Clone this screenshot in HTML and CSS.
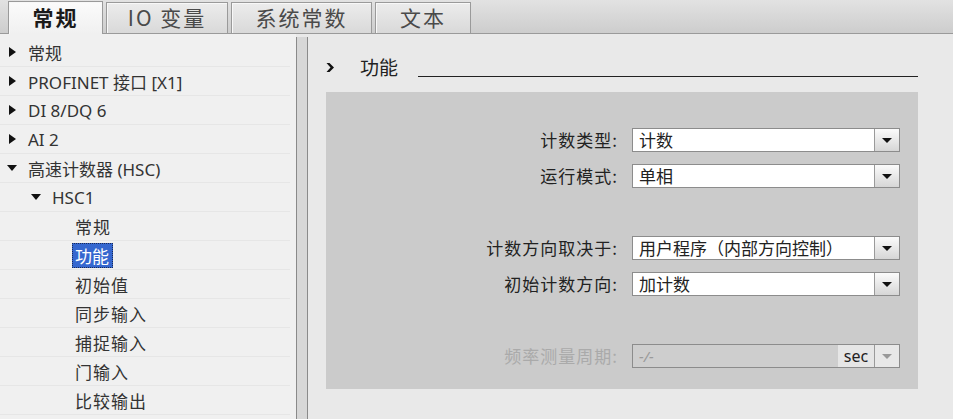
FILE: index.html
```html
<!DOCTYPE html>
<html lang="zh-CN">
<head>
    <meta charset="UTF-8">
    <title>HSC1 - 功能</title>
    <link rel="stylesheet" href="styles.css">
</head>
<body>

    <div class="tabs">
        <div class="tab active">常规</div>
        <div class="tab">IO 变量</div>
        <div class="tab">系统常数</div>
        <div class="tab">文本</div>
    </div>

    <div class="main">
        <ul class="tree">
            <li class="row"><span class="caret closed"></span>常规</li>
            <li class="row"><span class="caret closed"></span>PROFINET 接口 [X1]</li>
            <li class="row"><span class="caret closed"></span>DI 8/DQ 6</li>
            <li class="row"><span class="caret closed"></span>AI 2</li>
            <li class="row"><span class="caret open"></span>高速计数器 (HSC)</li>
            <li class="row level-2"><span class="caret open"></span>HSC1</li>
            <li class="row leaf"><span class="label">常规</span></li>
            <li class="row leaf"><span class="label selected">功能</span></li>
            <li class="row leaf"><span class="label">初始值</span></li>
            <li class="row leaf"><span class="label">同步输入</span></li>
            <li class="row leaf"><span class="label">捕捉输入</span></li>
            <li class="row leaf"><span class="label">门输入</span></li>
            <li class="row leaf"><span class="label">比较输出</span></li>
        </ul>

        <div class="splitter"></div>

        <div class="content">
            <div class="section-head">
                <svg class="chev" width="9" height="11" viewBox="0 0 9 11">
                    <path d="M0.5 1 L3.5 1 L8 5.5 L3.5 10 L0.5 10 L4.5 5.5 Z" fill="#111"/>
                </svg>
                <span class="title">功能</span>
                <span class="rule"></span>
            </div>

            <div class="panel">
                <div class="field">
                    <label>计数类型:</label>
                    <div class="select"><span class="value">计数</span><span class="btn"></span></div>
                </div>
                <div class="field">
                    <label>运行模式:</label>
                    <div class="select"><span class="value">单相</span><span class="btn"></span></div>
                </div>

                <div class="field group">
                    <label>计数方向取决于:</label>
                    <div class="select"><span class="value">用户程序（内部方向控制）</span><span class="btn"></span></div>
                </div>
                <div class="field">
                    <label>初始计数方向:</label>
                    <div class="select"><span class="value">加计数</span><span class="btn"></span></div>
                </div>

                <div class="field group disabled">
                    <label>频率测量周期:</label>
                    <div class="select"><span class="value">-/-</span><span class="unit">sec</span><span class="btn"></span></div>
                </div>
            </div>
        </div>
    </div>

</body>
</html>
```

FILE: styles.css
```css
body {
    margin: 0;
    width: 953px;
    height: 419px;
    overflow: hidden;
    font-family: "Noto Sans", "Noto Sans CJK SC", sans-serif;
    color: #222;
    background: #e9e9e9;
}

/* tab strip */
.tabs {
    height: 34px;
    box-sizing: border-box;
    display: flex;
    align-items: flex-end;
    gap: 3px;
    padding-left: 8px;
    background: linear-gradient(#e2e2e2, #cdcdcd);
    border-bottom: 1px solid #9a9a9a;
}

.tab {
    height: 31px;
    box-sizing: border-box;
    border: 1px solid #9a9a9a;
    border-bottom: none;
    box-shadow: inset 1px 1px 0 #f8f8f8;
    background: linear-gradient(#ececec, #d9d9d9);
    font-family: "Noto Sans CJK SC", sans-serif;
    font-size: 21px;
    line-height: 28px;
    letter-spacing: 2px;
    color: #4a4a4a;
    text-align: center;
}

.tab:nth-child(1) { width: 95px; }
.tab:nth-child(2) { width: 122px; }
.tab:nth-child(3) { width: 141px; }
.tab:nth-child(4) { width: 96px; }

.tab.active {
    height: 33px;
    margin-bottom: -1px;
    background: linear-gradient(#fbfbfb, #f0f0f0);
    font-weight: bold;
    color: #1a1a1a;
    line-height: 30px;
}

/* body */
.main {
    display: flex;
    height: 385px;
}

.tree {
    width: 296px;
    margin: 0;
    padding: 4px 0 0 0;
    list-style: none;
    background: #f0f0f0;
    font-size: 17px;
    color: #333;
}

.row {
    height: 29px;
    box-sizing: border-box;
    margin-right: 6px;
    padding-left: 8px;
    display: flex;
    align-items: center;
    border-bottom: 1px solid #e6e6e6;
    white-space: nowrap;
}

.row.level-2 {
    padding-left: 32px;
}

.row.leaf {
    padding-left: 72px;
}

.caret {
    width: 20px;
    height: 12px;
    position: relative;
    flex: none;
}

.caret.closed::before {
    content: "";
    position: absolute;
    left: 1px;
    top: 1px;
    border-left: 7px solid #111;
    border-top: 5px solid transparent;
    border-bottom: 5px solid transparent;
}

.caret.open::before {
    content: "";
    position: absolute;
    left: -1px;
    top: 3px;
    border-top: 6px solid #111;
    border-left: 5px solid transparent;
    border-right: 5px solid transparent;
}

.label {
    padding: 1px 3px;
    font-size: 17px;
    letter-spacing: 1px;
    font-family: "Noto Sans CJK SC", sans-serif;
    line-height: 23px;
}

.label.selected {
    background: #3567cf;
    color: #fff;
    letter-spacing: 0;
    padding-right: 4px;
    outline: 1px dotted #1a2a55;
    outline-offset: -1px;
}

.splitter {
    width: 10px;
    margin-top: 3px;
    border-left: 1px solid #8a8a8a;
    border-right: 1px solid #8a8a8a;
    background: #d7d7d7;
}

/* right side */
.content {
    flex: 1;
    padding: 22px 35px 0 18px;
    background: #e9e9e9;
}

.section-head {
    height: 22px;
    display: flex;
    align-items: flex-end;
}

.chev {
    margin: 0 25px 5px 0;
}

.title {
    font-family: "Noto Sans CJK SC", sans-serif;
    font-size: 19px;
    line-height: 22px;
    color: #222;
    margin-right: 20px;
}

.rule {
    flex: 1;
    border-bottom: 1px solid #222;
    margin-bottom: 1px;
}

.panel {
    margin-top: 14px;
    height: 297px;
    box-sizing: border-box;
    padding: 36px 18px 0 0;
    background: #cbcbcb;
    display: flex;
    flex-direction: column;
    gap: 12px;
}

.field {
    height: 24px;
    display: grid;
    grid-template-columns: 1fr 268px;
    column-gap: 14px;
    align-items: center;
}

.field.group {
    margin-top: 36px;
}

.field label {
    text-align: right;
    font-family: "Noto Sans CJK SC", sans-serif;
    font-size: 17px;
    line-height: 24px;
    letter-spacing: 1px;
    color: #222;
}

.select {
    height: 24px;
    box-sizing: border-box;
    display: flex;
    border: 1px solid #8c8c8c;
    background: #fff;
}

.value {
    flex: 1;
    padding-left: 6px;
    font-family: "Noto Sans CJK SC", sans-serif;
    font-size: 17px;
    line-height: 22px;
    color: #222;
    white-space: nowrap;
}

.btn {
    width: 24px;
    flex: none;
    border-left: 1px solid #9a9a9a;
    background: linear-gradient(#fbfbfb, #d6d6d6);
    position: relative;
}

.btn::after {
    content: "";
    position: absolute;
    left: 7px;
    top: 9px;
    border-top: 5px solid #111;
    border-left: 5px solid transparent;
    border-right: 5px solid transparent;
}

.field.disabled label {
    color: #aaaaaa;
}

.field.disabled .select {
    background: #cecece;
}

.field.disabled .value {
    color: #9a9a9a;
    font-family: "Noto Sans", sans-serif;
    font-style: italic;
    font-size: 15px;
}

.unit {
    width: 36px;
    flex: none;
    background: #e6e6e6;
    font-size: 16px;
    line-height: 22px;
    text-align: center;
    color: #222;
}

.field.disabled .btn {
    background: #e8e8e8;
}

.field.disabled .btn::after {
    border-top-color: #999;
}
```
